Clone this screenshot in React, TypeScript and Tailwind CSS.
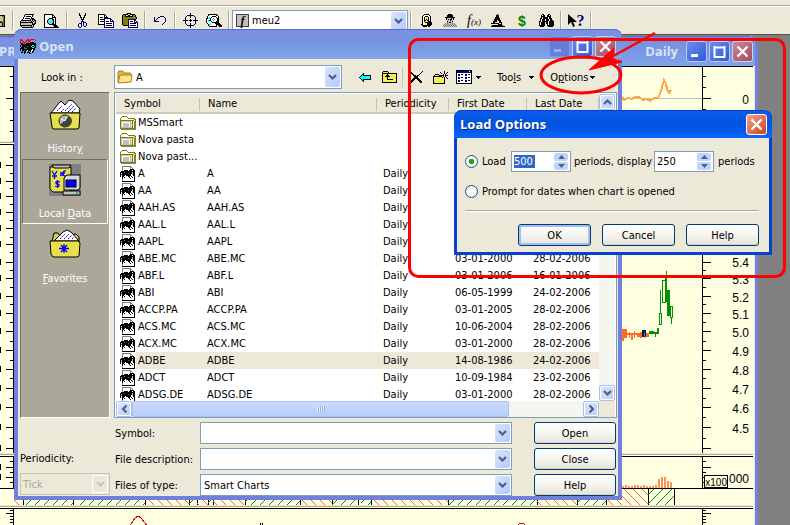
import type { ReactNode } from 'react';

const PALETTE: Record<string, string> = {
    k: '#000000',
    w: '#ffffff',
    g: '#808080',
    s: '#c0c0c0',
    y: '#f5ec5a',
    o: '#808000',
    n: '#000080',
    b: '#0000ff',
    c: '#00ffff',
    t: '#008080',
    r: '#ff0000',
    v: '#008000',
};

function Pixels({ rows, className }: { rows: string[]; className?: string }) {
    const width = Math.max(...rows.map((row) => row.length));
    const cells: ReactNode[] = [];

    rows.forEach((row, y) => {
        let x = 0;
        while (x < row.length) {
            const key = row[x];
            let end = x + 1;
            while (end < row.length && row[end] === key) end++;
            if (PALETTE[key]) {
                cells.push(<rect key={`${x}-${y}`} x={x} y={y} width={end - x} height={1} fill={PALETTE[key]} />);
            }
            x = end;
        }
    });

    return (
        <svg
            width={width}
            height={rows.length}
            viewBox={`0 0 ${width} ${rows.length}`}
            shapeRendering="crispEdges"
            className={`shrink-0 ${className ?? ''}`}
            aria-hidden="true"
        >
            {cells}
        </svg>
    );
}

const SAVE = [
    'kkkkkkkkkkkkkk',
    'kokssssssssook',
    'kookssssssssok',
    'kookssssssssok',
    'kookssssssssok',
    'kookssssssssok',
    'kooooooooooook',
    'koookkkkkkkook',
    'koookkkkssskok',
    'koookkkkssskok',
    'koookkkkssskok',
    'kkkkkkkkkkkkkk',
];

const PRINT = [
    '.....kkkkkkkkk..',
    '....kwwwwwwwk...',
    '....kwkkkkkwk...',
    '...kwwwwwwwk....',
    '...kwkkkkkwkkk..',
    '..kwwwwwwwkskkk.',
    '.kkkkkkkkkkskskk',
    'kssssssssssksksk',
    'kkkkkkkkkkkkkssk',
    'ksssssssyysskskk',
    'kssssssssssskkk.',
    'kkkkkkkkkkkksk..',
    '.ksssssssssksk..',
    '..kkkkkkkkkkk...',
];

const PREVIEW = [
    'kkkkkkkkk.......',
    'kwwwwwwwkk......',
    'kwwwwwwwkwk.....',
    'kwwwwwwwkkkk....',
    'kwwwwkkkkwwk....',
    'kwwwkccskkwk....',
    'kwwkcwcssk.k....',
    'kwwkccccsk.k....',
    'kwwkscccck.k....',
    'kwwwkssckk.k....',
    'kwwwwkkkkkkk....',
    'kwwwwwwwwkkkk...',
    'kwwwwwwwwwkkkk..',
    'kkkkkkkkkkkkkkk.',
];

const CUT = [
    '..k.....k.',
    '..k.....k.',
    '..kk...kk.',
    '...k...k..',
    '...kk.kk..',
    '....k.k...',
    '....kkk...',
    '.....k....',
    '....nnn...',
    '....n.nnn.',
    '..nnn.n..n',
    '.n..n.n..n',
    '.n..n.n..n',
    '.n..n..nn.',
    '..nn......',
];

const COPY = [
    'kkkkkkk.........',
    'kwwwwwkk........',
    'kwwwwwkwk.......',
    'kwkkkwkkkk......',
    'kwwwwwnnnnnnn...',
    'kwkkkknwwwwwnn..',
    'kwwwwwnwwwwwnwn.',
    'kwkkkknwkkkwnnnn',
    'kwwwwwnwwwwwwwwn',
    'kwwwwwnwkkkkkkwn',
    'kkkkkknwwwwwwwwn',
    '......nwkkkkkkwn',
    '......nwwwwwwwwn',
    '......nnnnnnnnnn',
];

const PASTE = [
    '.....kkkk.......',
    '.kkkkkyykkkkk...',
    'kogkyykkyykgok..',
    'kogkkkkkkkkgok..',
    'koooooooooooook.',
    'koooooooooooook.',
    'kooooonnnnnnnk..',
    'kooooonwwwwwnn..',
    'kooooonwkkkwnwn.',
    'kooooonwwwwwnnnn',
    'kooooonwkkkkkkwn',
    'kooooonwwwwwwwwn',
    '.kkkkknwkkkkkkwn',
    '......nwwwwwwwwn',
    '......nnnnnnnnnn',
];

const UNDO = [
    '......nnnn..',
    'n...nn....n.',
    'n..n.......n',
    'n.n........n',
    'nn.........n',
    'nnnnn......n',
    '..........n.',
    '.........n..',
    '........n...',
];

const TARGET = [
    '.......k.......',
    '.......k.......',
    '....nnnknnn....',
    '...n...k...n...',
    '..n....k....n..',
    '..n.........n..',
    '..n....k....n..',
    'kkkkk.kkk.kkkkk',
    '..n....k....n..',
    '..n.........n..',
    '..n....k....n..',
    '...n...k...n...',
    '....nnnknnn....',
    '.......k.......',
    '.......k.......',
];

const FIND = [
    '..kkkkkkkkk.....',
    '..kwwwwwwwkk....',
    '.kwwwwkkkkwwk...',
    '.kwcwkwwwwkwk...',
    'kkcckwwgwwwkk...',
    'kwwwkwgwgwwkk...',
    'kwckkwwgwwwkk...',
    'kwccwkwwwwkkk...',
    'kwwwwwkkkkkkk...',
    '.kwwcwwwwkkkkk..',
    '..kccwwwwwkkkkk.',
    '..kwwwwwwwk.kkkk',
    '...kkkkkkkk..kkk',
];

const EXPERT = [
    '...kkkkk...',
    '..kwwwwwk..',
    '.kwwkkkwwk.',
    '.kwkyyykwk.',
    '.kwkyyykwk.',
    '.kwkykykwk.',
    '.kwkkykkwk.',
    '.kwkyyykkk.',
    '.kwwkkkkkkk',
    '.kwwwwkkkkk',
    'kkwwyykkkkk',
    '.kkkkkkkkk.',
    '..kkkk.kk..',
];

const DETECTIVE = [
    '.....kkkk.....',
    '....kkkkkk....',
    '....kkkkkk....',
    '..kkkkkkkkkk..',
    '...kssssksk...',
    '...kskskksk...',
    '....ssskss....',
    '....kssssk....',
    '....gskksg....',
    '..gsgssssgsg..',
    '.gsgsgsgsgsgs.',
    'gsgsgsgsgsgsgs',
    'sgsgsgsgsgsgsg',
];

const SCOPE = [
    '......k.......',
    '.....kkk......',
    '.....kkk......',
    '....kkkk......',
    '....kkkkk.....',
    '...kkkkkk.....',
    '...kkk.kkk....',
    '..kkkk..kk....',
    '..kk....kkk...',
    'kkkkkkkkyyk...',
    '.......kkkk...',
    '.kkkkkkkkkkk..',
    'kkkkkkkkkkkkkk',
];

const BINOCULARS = [
    '...kk....kk....',
    '..kwkk..kkwk...',
    '..kkkk..kkkk...',
    '..kwkkkkkwkk...',
    '.kkwkkkkkwkkk..',
    '.kwkkkwkkkwkk..',
    '.kwkkkwkkkwkkk.',
    'kkwkkkkkkwkkkkk',
    'kwkkkkwkkwkkkkk',
    'kwkkkk.kkwkkkkk',
    'kwkkkk..kwkkkkk',
    'kkkkkk..kkkkkkk',
    '.kkkk....kkkkk.',
];

const BACK = [
    '....k.......',
    '...kk.......',
    '..kckkkkkkkk',
    '.kccccccccck',
    'kcccccccccck',
    '.kccccccccck',
    '..kckkkkkkkk',
    '...kk.......',
    '....k.......',
];

const UP = [
    '.kkkkk.........',
    'kyyyyyk........',
    'kkkkkkkkkkkkkkk',
    'kyyyykyyyyyyyyk',
    'kyyykkkyyyyyyyk',
    'kyykkkkkyyyyyyk',
    'kyyyykyyyyyyyyk',
    'kyyyykyyyyyyyyk',
    'kyyyykkkkkkyyyk',
    'kyyyyyyyyyyyyyk',
    'kyyyyyyyyyyyyyk',
    'kkkkkkkkkkkkkkk',
];

const REMOVE = [
    'k...........k',
    'kk.........k.',
    '.kk.......k..',
    '..kk.....k...',
    '...kkk.kk....',
    '....kkkk.....',
    '....kkkk.....',
    '...kkkkkk....',
    '..kkk..kkk...',
    '.kkk....kkk..',
    'kkk......kkk.',
    'kk........kk.',
];

const NEW_FOLDER = [
    '...........k...',
    '.......k...k..k',
    '........k..k.k.',
    '..kkkk....k.k..',
    '.kyyyykkkkk.kkk',
    'kkkkkkkkk.k.k..',
    'kyyyyyyyyk.k.k.',
    'kyyyyyyyyyyk..k',
    'kyyyyyyyyyyk...',
    'kyyyyyyyyyyk...',
    'kyyyyyyyyyyk...',
    'kyyyyyyyyyyk...',
    'kkkkkkkkkkkk...',
];

const VIEWS = [
    'kkkkkkkkkkkkkkkk',
    'knnnnnnnnnnnnwnk',
    'knnnnnnnnnnnnnnk',
    'kwwwwwwwwwwwwwwk',
    'kwnnwkkwwnnwkkwk',
    'kwnnwwwwwnnwwwwk',
    'kwwwwwwwwwwwwwwk',
    'kwnnwkkwwnnwkkwk',
    'kwnnwwwwwnnwwwwk',
    'kwwwwwwwwwwwwwwk',
    'kwnnwkkwwnnwkkwk',
    'kwnnwwwwwnnwwwwk',
    'kwwwwwwwwwwwwwwk',
    'kkkkkkkkkkkkkkkk',
];

const SECURITY = [
    '..ggggggggg.....',
    '..gwwwwwwwgg....',
    '..gwwwwwwwgwg...',
    '..gwwwwwwwkkkk..',
    '..gwkkkkwkkkwkk.',
    '.kkkkkkkkkkkkkk.',
    'kkkktkkkkkkkskk.',
    'kskkkkkktkkkskk.',
    'ktkkkkkkkkkwskk.',
    'k.kkkwkkkkkwwkk.',
    'k.kkwwwwkkwkwwk.',
    '..kwkwwwwkwwkwk.',
    '..kwwwwwwwkwwwk.',
    '..gwwwwwwwwwwwk.',
    '..gwwwwwwwwwwwk.',
    '..kkkkkkkkkkkkk.',
];

const FOLDER = [
    '..ooooo.........',
    '.owwwwwo........',
    'owwwwwwwooooooo.',
    'owwwwwwwwwwwwwoo',
    'oooooooooooooowo',
    'osssssssssswowoo',
    'oswwwwwwwwsyowoo',
    'oswsssssswsyowog',
    'oswsssssswsyowog',
    'oswsssssswsyowog',
    'oswsssssswsyowog',
    'osssssssssssowog',
    'ooooooooooooooog',
    '.ggggggggggggggg',
];

const BUG = [
    'rr.....rr.rrrrr.',
    'rrr...rrrrr....r',
    'r.rr.rr.rr......',
    'r..rrr..r.kkkk..',
    'rkk.r.kkkkkkkkkk',
    '.kkkkkkkkkkkkkkk',
    'k.kkkkkkkkkkcckk',
    'k.kkkkktkkkckkck',
    '.kkktkkkkkkkcckk',
    'kkkktttkkkkkkkk.',
    'k.kkkkkkkkkkwkk.',
    'k.kktkkskkkwwk..',
    '..k.kkwsk.kwkk..',
    '.kk.kk.kkk..k...',
    '....k....kk.....',
];

function BarButton({ label, children }: { label: string; children: ReactNode }) {
    return (
        <button type="button" aria-label={label} className="flex h-6 w-6 shrink-0 items-center justify-center">
            {children}
        </button>
    );
}

function BarDivider() {
    return (
        <span className="flex h-full w-[6px] shrink-0 justify-center py-1">
            <span className="w-px bg-[#aca899]" />
            <span className="w-px bg-white" />
        </span>
    );
}

function Chevron({ className }: { className?: string }) {
    return (
        <svg width="9" height="6" viewBox="0 0 9 6" className={className} aria-hidden="true">
            <path d="M1 1 4.500 4.500 8 1" fill="none" stroke="currentColor" strokeWidth="2.200" />
        </svg>
    );
}

function Combo({ label, options, icon, className }: { label: string; options: string[]; icon?: ReactNode; className?: string }) {
    return (
        <div className={`relative flex items-center border border-[#7f9db9] bg-white ${className ?? ''}`}>
            {icon && <span className="pl-[2px]">{icon}</span>}
            <select aria-label={label} className="h-full min-w-0 grow appearance-none bg-transparent pr-5 pl-[3px] outline-none">
                {options.map((option) => (
                    <option key={option}>{option}</option>
                ))}
            </select>
            <span className="pointer-events-none absolute inset-y-px right-px flex w-[15px] items-center justify-center rounded-[2px] bg-gradient-to-br from-[#d8e4fd] to-[#b3cafb] text-[#4d6185]">
                <Chevron />
            </span>
        </div>
    );
}

function PushButton({ children, isDefault, className }: { children: ReactNode; isDefault?: boolean; className?: string }) {
    return (
        <button
            type="button"
            className={`flex h-[22px] items-center justify-center rounded-[3px] border border-[#003c74] bg-gradient-to-b from-white via-[#f5f4ee] to-[#e6e3d8] ${
                isDefault ? 'shadow-[inset_0_0_0_2px_#a5bdf0]' : 'shadow-[inset_0_-1px_0_#d6d0c5]'
            } ${className ?? ''}`}
        >
            {children}
        </button>
    );
}

function CaptionButton({ kind, dim, active }: { kind: 'minimize' | 'maximize' | 'close'; dim?: boolean; active?: boolean }) {
    const tone =
        kind === 'close'
            ? active
                ? 'border-white bg-gradient-to-br from-[#f0a088] to-[#d0401c]'
                : 'border-[#c9d1f2] bg-gradient-to-br from-[#c48a9c] to-[#a8495c]'
            : dim
              ? 'border-[#7f93e2] bg-[#5c78d8] opacity-80'
              : 'border-[#b9c8f5] bg-gradient-to-br from-[#6b8af0] to-[#3059d6]';

    return (
        <button type="button" aria-label={kind} className={`flex h-[21px] w-[21px] items-center justify-center rounded-[3px] border ${tone}`}>
            <svg width="13" height="13" viewBox="0 0 13 13" fill="none" stroke={dim ? '#9db0ee' : '#fff'} strokeWidth="2" aria-hidden="true">
                {kind === 'minimize' && <path d="M1 10.500H8" strokeWidth="3" />}
                {kind === 'maximize' && <path d="M1.500 1V12H11.500V1M1 2.500H12" />}
                {kind === 'close' && <path d="M1.500 1.500 11.500 11.500M11.500 1.500 1.500 11.500" strokeWidth="2.400" />}
            </svg>
        </button>
    );
}

function MainToolbar() {
    return (
        <div className="border-b border-[#55534b] bg-[#ece9d8]">
            <div className="h-[6px] border-b border-[#aca899]" />
            <div className="flex h-7 items-center overflow-hidden border-t border-white">
                <span className="-ml-[14px] flex">
                    <BarButton label="Save"><Pixels rows={SAVE} /></BarButton>
                </span>
                <BarDivider />
                <BarButton label="Print"><Pixels rows={PRINT} /></BarButton>
                <BarButton label="Print preview"><Pixels rows={PREVIEW} /></BarButton>
                <BarDivider />
                <BarButton label="Cut"><Pixels rows={CUT} /></BarButton>
                <BarButton label="Copy"><Pixels rows={COPY} /></BarButton>
                <BarButton label="Paste"><Pixels rows={PASTE} /></BarButton>
                <BarDivider />
                <BarButton label="Undo"><Pixels rows={UNDO} /></BarButton>
                <BarDivider />
                <BarButton label="Crosshair"><Pixels rows={TARGET} /></BarButton>
                <BarButton label="Zoom"><Pixels rows={FIND} /></BarButton>
                <BarDivider />
                <Combo
                    label="Indicator"
                    options={['meu2']}
                    className="h-[22px] w-[176px] shrink-0"
                    icon={
                        <span className="ml-px flex h-[13px] w-[13px] items-center justify-center border border-[#404040] bg-[#c0c0c0] font-['Liberation_Serif',serif] text-[12px] leading-none font-bold italic">
                            f
                        </span>
                    }
                />
                <BarDivider />
                <BarButton label="Expert Advisor"><Pixels rows={EXPERT} /></BarButton>
                <BarButton label="Explorer"><Pixels rows={DETECTIVE} /></BarButton>
                <BarButton label="Indicator Builder">
                    <span className="font-['Liberation_Serif',serif] text-[14px] leading-none italic">
                        f<span className="text-[9px]">(x)</span>
                    </span>
                </BarButton>
                <BarButton label="System Tester"><Pixels rows={SCOPE} /></BarButton>
                <BarButton label="Option Scope">
                    <span className="font-['Liberation_Sans',sans-serif] text-[14px] leading-none font-bold text-[#008000]">$</span>
                </BarButton>
                <BarButton label="Search"><Pixels rows={BINOCULARS} /></BarButton>
                <BarDivider />
                <BarButton label="Context help">
                    <svg width="9" height="14" viewBox="0 0 9 14" aria-hidden="true">
                        <path d="M0 0V11L3 8 5 13 7 12 5 8H9Z" />
                    </svg>
                    <span className="font-['Liberation_Serif',serif] text-[16px] leading-none font-bold text-[#000080]">?</span>
                </BarButton>
                <BarDivider />
            </div>
        </div>
    );
}

const TOP_TICKS = [76, 87, 98, 109, 120, 131];
const PRICE_TICKS = [157, 165, 173, 181, 188, 196, 204, 212, 220, 228, 237, 244, 252, 262, 270, 278, 287, 296, 304, 313, 322, 331, 341, 350, 360, 369, 378, 388, 398, 407, 417, 427, 438, 448];
const PRICE_LABELS = [
    { y: 262, text: '5.4' },
    { y: 279, text: '5.3' },
    { y: 297, text: '5.2' },
    { y: 314, text: '5.1' },
    { y: 332, text: '5.0' },
    { y: 351, text: '4.9' },
    { y: 370, text: '4.8' },
    { y: 389, text: '4.7' },
    { y: 408, text: '4.6' },
    { y: 428, text: '4.5' },
];
const HATCHES: [number, number, 'up' | 'down'][] = [
    [14, 23, 'down'],
    [23, 73, 'up'],
    [76, 145, 'up'],
    [145, 189, 'down'],
    [189, 197, 'up'],
    [197, 208, 'down'],
    [208, 213, 'up'],
    [213, 245, 'down'],
    [245, 300, 'up'],
    [300, 332, 'down'],
    [332, 358, 'up'],
    [361, 371, 'up'],
    [371, 448, 'down'],
    [448, 537, 'up'],
    [537, 577, 'down'],
    [577, 606, 'up'],
    [606, 648, 'down'],
    [648, 674, 'up'],
];
const VOLUMES = [2, 2, 3, 2, 2, 3, 3, 2, 3, 2, 2, 2, 3, 9, 11, 11, 7, 6];

function Ticks() {
    const price = PRICE_TICKS.map((y, i) => ({ y, major: i % 2 === 1 }));
    const top = TOP_TICKS.map((y) => ({ y, major: y === 98 }));
    const volume = [461, 467, 472, 477, 482].map((y, i) => ({ y, major: i % 2 === 1 }));
    const bottom = [510, 513, 516, 519, 522].map((y) => ({ y, major: y === 513 }));

    return (
        <>
            {[...price, ...top, ...volume, ...bottom].map(({ y, major }) => (
                <g key={y}>
                    <rect x={major ? 6 : 10} y={y} width={major ? 7 : 3} height="1" />
                    <rect x="703" y={y} width={major ? 8 : 3} height="1" />
                    {major && y > 150 && y < 480 && <rect x="0" y={y - 3} width="1" height="6" />}
                </g>
            ))}
        </>
    );
}

// Drawn in screen coordinates, the toolbar and title bar take the first 66px.
function Chart() {
    return (
        <svg width="754" height="459" viewBox="0 66 754 459" shapeRendering="crispEdges" className="shrink-0" role="img" aria-label="Daily chart">
            <defs>
                <pattern id="up" width="9" height="9" patternUnits="userSpaceOnUse">
                    <path d="M0 9 9 0" stroke="#009000" strokeWidth="1.200" />
                </pattern>
                <pattern id="down" width="9" height="9" patternUnits="userSpaceOnUse">
                    <path d="M0 0 9 9" stroke="#ff6a22" strokeWidth="1.200" />
                </pattern>
            </defs>
            <rect y="66" width="754" height="459" fill="#ffffe1" />
            <path d="M0 66.500H753M0 144.500H753M0 456.500H753M0 488.500H753M0 508.500H753" stroke="#000" />
            <path d="M0 142.500H753M0 454.500H753M0 506.500H753" stroke="#aca899" strokeWidth="1" />
            <path d="M0 141.500H753M0 453.500H753M0 505.500H753" stroke="#ece9d8" strokeWidth="1" />
            <path d="M13.500 66V142M13.500 145V453M13.500 456V489M13.500 508V525M702.500 66V142M702.500 145V453M702.500 456V488M702.500 508V525" stroke="#000" />
            <Ticks />

            <path d="M600 98.500H702" stroke="#c0c0c0" />
            <path
                d="M618 96 622 97 624 100 628 98 632 99 635 97 639 97 643 100 647 99 650 101 654 98 658 98 660 94 662 87 664 80 666 84 667 89 669 93 671 90"
                fill="none"
                stroke="#ffa64d"
                strokeWidth="2"
            />

            <g fill="#ff6a22">
                <rect x="622" y="329" width="2" height="12" />
                <rect x="624" y="329" width="3" height="9" />
                <rect x="629" y="332" width="1" height="6" />
                <rect x="631" y="335" width="2" height="5" />
                <rect x="634" y="331" width="1" height="7" />
                <rect x="637" y="333" width="3" height="4" />
                <rect x="640" y="332" width="2" height="6" />
                <rect x="646" y="333" width="3" height="4" />
                <rect x="627" y="333" width="20" height="2" />
            </g>
            <rect x="642" y="330" width="4" height="7" fill="#001c3c" />
            <rect x="644" y="333" width="1" height="5" fill="#2a9fd8" />
            <g fill="#009000">
                <rect x="649" y="331" width="5" height="3" />
                <rect x="654" y="332" width="3" height="2" />
                <rect x="657" y="328" width="2" height="6" />
                <rect x="655" y="334" width="1" height="3" />
                <rect x="660" y="290" width="1" height="23" />
                <rect x="665" y="278" width="2" height="24" />
                <rect x="666" y="271" width="1" height="8" />
                <rect x="665" y="280" width="1" height="18" />
                <rect x="667" y="290" width="3" height="26" />
                <rect x="671" y="317" width="1" height="7" />
            </g>
            <g fill="#ffffe1" stroke="#009000">
                <rect x="659.500" y="313.500" width="2" height="11" />
                <rect x="662.500" y="280.500" width="3" height="22" />
                <rect x="670.500" y="306.500" width="2" height="11" />
            </g>

            {VOLUMES.map((height, i) => (
                <rect key={i} x={619 + i * 3} y={488 - height} width={2} height={height} fill="#ff8f5a" />
            ))}
            {HATCHES.map(([from, to, pattern]) => (
                <g key={from}>
                    <rect x={from} y="489" width={to - from} height="16" fill={`url(#${pattern})`} />
                    <rect x={to} y="489" width="1" height="16" />
                </g>
            ))}
            <path d="M129 527 135 518 138 516 141 518 148 527M517 526 520 523 523 523 526 526" fill="none" stroke="#e00000" />
            <path d="M260.500 523V525M262.500 523V525" stroke="#000" />

            <g fontFamily="Liberation Sans, sans-serif" fontSize="12" textAnchor="end">
                <text x="749" y="104">0</text>
                {PRICE_LABELS.map(({ y, text }) => (
                    <text key={text} x="749" y={y + 5}>{text}</text>
                ))}
                <text x="749" y="483">000</text>
                <rect x="704.500" y="475.500" width="23" height="12" fill="#ffffe1" stroke="#000" />
                <text x="727" y="486" fontSize="10">x100</text>
            </g>
        </svg>
    );
}

function ChartWindow() {
    return (
        <section className="absolute -left-1 top-[36px] flex h-full w-[762px] flex-col rounded-tr-lg border-x-[3px] border-[#7080dc] bg-[#ece9d8]">
            <header className="flex h-[30px] shrink-0 items-center rounded-tr-md border-t border-[#5c68d0] bg-gradient-to-b from-[#7a8fe0] via-[#7797e2] to-[#82a4ea] pr-[2px] font-['Open_Sans','Noto_Sans',sans-serif] text-[13px] font-bold text-[#d8e4f8]">
                <span className="grow">PR</span>
                <span>Daily</span>
                <span className="ml-2 flex gap-[2px]">
                    <CaptionButton kind="minimize" />
                    <CaptionButton kind="maximize" />
                    <CaptionButton kind="close" />
                </span>
            </header>
            <div className="flex pl-px">
                <Chart />
            </div>
        </section>
    );
}

interface Security {
    symbol: string;
    first?: string;
    last?: string;
}

const FOLDERS = ['MSSmart', 'Nova pasta', 'Nova past...'];

const SECURITIES: Security[] = [
    { symbol: 'A' },
    { symbol: 'AA' },
    { symbol: 'AAH.AS' },
    { symbol: 'AAL.L' },
    { symbol: 'AAPL' },
    { symbol: 'ABE.MC', first: '03-01-2000', last: '28-02-2006' },
    { symbol: 'ABF.L', first: '03-01-2006', last: '16-01-2006' },
    { symbol: 'ABI', first: '06-05-1999', last: '24-02-2006' },
    { symbol: 'ACCP.PA', first: '03-01-2005', last: '28-02-2006' },
    { symbol: 'ACS.MC', first: '10-06-2004', last: '28-02-2006' },
    { symbol: 'ACX.MC', first: '03-01-2000', last: '28-02-2006' },
    { symbol: 'ADBE', first: '14-08-1986', last: '24-02-2006' },
    { symbol: 'ADCT', first: '10-09-1984', last: '23-02-2006' },
    { symbol: 'ADSG.DE', first: '03-01-2000', last: '28-02-2006' },
];

function ScrollButton({ label, turn }: { label: string; turn: string }) {
    return (
        <button
            type="button"
            aria-label={label}
            className="flex h-4 w-4 shrink-0 items-center justify-center rounded-[2px] border border-[#a9bff0] bg-gradient-to-br from-[#dce7fe] to-[#b8cdfb] text-[#4d6185] shadow-[inset_0_0_0_1px_#fff]"
        >
            <Chevron className={turn} />
        </button>
    );
}

function FileList() {
    return (
        <div className="flex min-w-0 grow flex-col border border-[#7f9db9] bg-white px-px pt-px">
            <div className="flex min-h-0 grow">
                <div className="min-w-0 grow overflow-hidden">
                    <table className="w-full table-fixed border-collapse text-left leading-3">
                        <colgroup>
                            <col className="w-[84px]" />
                            <col />
                            <col className="w-[72px]" />
                            <col className="w-[78px]" />
                            <col className="w-[72px]" />
                        </colgroup>
                        <thead>
                            <tr className="h-5 bg-[#ece9d8] shadow-[inset_0_-2px_0_#d0ccbb]">
                                {['Symbol', 'Name', 'Periodicity', 'First Date', 'Last Date'].map((title) => (
                                    <th key={title} className="p-0 font-normal">
                                        <span className="flex h-[13px] items-center border-r border-[#c7c5b2] pl-2 whitespace-nowrap">{title}</span>
                                    </th>
                                ))}
                            </tr>
                        </thead>
                        <tbody>
                            {FOLDERS.map((folder) => (
                                <tr key={folder} className="h-[17px]">
                                    <td colSpan={5} className="p-0 pl-1">
                                        <span className="flex h-[17px] items-center gap-[2px] whitespace-nowrap">
                                            <Pixels rows={FOLDER} />
                                            {folder}
                                        </span>
                                    </td>
                                </tr>
                            ))}
                            {SECURITIES.map(({ symbol, first, last }) => (
                                <tr key={symbol} className={`h-[17px] ${symbol === 'ADBE' ? 'bg-[#ece9d8]' : ''}`}>
                                    <td className="p-0">
                                        <span className="flex h-[17px] items-center whitespace-nowrap">
                                            <span className="flex h-full w-5 items-center bg-white pl-1">
                                                <Pixels rows={SECURITY} />
                                            </span>
                                            <span className="pl-[2px]">{symbol}</span>
                                        </span>
                                    </td>
                                    <td className="p-0 pl-[7px]">{symbol}</td>
                                    <td className="p-0 pl-[6px]">Daily</td>
                                    <td className="p-0 pl-[6px] whitespace-nowrap">{first}</td>
                                    <td className="p-0 pl-[6px] whitespace-nowrap">{last}</td>
                                </tr>
                            ))}
                        </tbody>
                    </table>
                </div>
                <div className="flex w-4 flex-col bg-[#f6f6f1]">
                    <ScrollButton label="Scroll up" turn="rotate-180" />
                    <div className="h-10 rounded-[2px] border border-[#a9bff0] bg-[#c8d8fc]" />
                    <div className="grow" />
                    <ScrollButton label="Scroll down" turn="" />
                </div>
            </div>
            <div className="flex h-4 shrink-0 bg-[#ece9d8]">
                <div className="flex grow bg-[#f6f6f1]">
                    <ScrollButton label="Scroll left" turn="rotate-90" />
                    <div className="flex w-[78%] items-center justify-center gap-px rounded-[2px] border border-[#a9bff0] bg-gradient-to-b from-[#cbdafd] to-[#b9cdfa]">
                        {[0, 1, 2, 3].map((grip) => (
                            <span key={grip} className="h-[6px] w-px bg-[#eef4fe] shadow-[1px_0_0_#8cb0f8]" />
                        ))}
                    </div>
                    <div className="grow" />
                    <ScrollButton label="Scroll right" turn="-rotate-90" />
                </div>
                <div className="w-4" />
            </div>
        </div>
    );
}

function PlaceFolder({ children }: { children: ReactNode }) {
    return (
        <svg width="32" height="32" viewBox="0 0 32 32" aria-hidden="true">
            {children}
        </svg>
    );
}

function Places() {
    return (
        <nav className="flex w-[90px] shrink-0 flex-col border border-t-[#716f64] border-r-white border-b-white border-l-[#716f64] bg-[#aca899] p-px text-white">
            <a href="#history" className="flex h-[65px] flex-col items-center pt-[5px]">
                <PlaceFolder>
                    <path d="M2 14 10 4 12 2 16 6 20 1 24 2 31 10 30 14Z" fill="#fff" stroke="#000" />
                    <path d="M8 12 13 7M12 13 15 10M16 12 23 5M19 13 25 7M23 13 27 9" stroke="#0000d0" strokeDasharray="2 1" />
                    <path d="M1 14H31L30 29 28 30H4L3 28Z" fill="#e8e04a" stroke="#000" />
                    <circle cx="16" cy="22" r="6" fill="#b8b8b8" stroke="#202020" />
                    <path d="M11 26 16 21 20 17A6 6 0 0 1 16 28Z" fill="#404040" />
                    <path d="M12 20 16 22 18 18" stroke="#fff" fill="none" />
                </PlaceFolder>
                <span className="mt-[11px]">Histor<u>y</u></span>
            </a>
            <a
                href="#local"
                className="flex h-[65px] flex-col items-center border border-t-[#716f64] border-r-white border-b-white border-l-[#716f64] pt-1"
            >
                <svg width="32" height="32" viewBox="0 0 32 32" aria-hidden="true">
                    <rect width="32" height="32" fill="#808080" />
                    <path d="M1 3H22V28H4L1 25Z" fill="#e8e04a" stroke="#000" />
                    <path d="M3 1H22L20 4H5Z" fill="#c0c0c0" stroke="#000" />
                    <path d="M3 7 5.500 11 8 7M5.500 11V15M3 12H8" fill="none" stroke="#0000ff" strokeWidth="1.300" />
                    <path d="M17 7C13 6 13 13 17 12M11 9H16M11 11H15" fill="none" stroke="#0000ff" strokeWidth="1.300" />
                    <path d="M11 18C6 16 6 20 8.500 20S11 24 6 22M8.500 16V24" fill="none" stroke="#0000ff" strokeWidth="1.300" />
                    <path d="M15 14 18 11H31V24L29 26H15Z" fill="#d8d8d8" stroke="#000" />
                    <rect x="17" y="16" width="10" height="7" fill="#0000ff" stroke="#000" />
                    <path d="M14 27H31V31H14Z" fill="#c0c0c0" stroke="#000" />
                    <path d="M27 29H29" stroke="#00c000" strokeWidth="1.500" />
                </svg>
                <span className="mt-[11px]">Local <u>D</u>ata</span>
            </a>
            <a href="#favorites" className="flex h-[65px] flex-col items-center pt-[5px]">
                <PlaceFolder>
                    <path d="M3 13 5 4H9L11 7 27 5 30 8V13Z" fill="#d4cc50" stroke="#000" />
                    <path d="M5 12 14 3 18 1 22 3 30 12Z" fill="#fff" stroke="#000" />
                    <path d="M11 10 16 5M15 10 20 5M19 10 23 6M23 10 25 8" stroke="#0000d0" strokeDasharray="2 1" />
                    <path d="M1 12H29L31 14 30 27 28 28H4L2 25Z" fill="#e8e04a" stroke="#000" />
                    <path d="M15 15V24M10 19.500H20M12 16 18 23M18 16 12 23" stroke="#0000ff" strokeWidth="1.300" />
                </PlaceFolder>
                <span className="mt-[11px]"><u>F</u>avorites</span>
            </a>
        </nav>
    );
}

function Caret() {
    return (
        <svg width="5" height="3" viewBox="0 0 5 3" shapeRendering="crispEdges" aria-hidden="true">
            <path d="M0 0H5L2.500 3Z" />
        </svg>
    );
}

function OpenDialog() {
    return (
        <section
            role="dialog"
            aria-label="Open"
            className="absolute top-[29px] left-[14px] flex w-[608px] flex-col rounded-t-lg border-4 border-t-0 border-[#7080dc] bg-[#ece9d8]"
        >
            <header className="-mx-1 flex h-[30px] items-center rounded-t-lg border-t border-[#5c68d0] bg-gradient-to-b from-[#7a8fe0] via-[#7797e2] to-[#82a4ea] px-[6px] pt-[3px] font-['Open_Sans','Noto_Sans',sans-serif] text-[13px] font-bold text-[#d8e4f8]">
                <Pixels rows={BUG} />
                <span className="grow pl-[3px]">Open</span>
                <span className="flex gap-[2px]">
                    <CaptionButton kind="minimize" dim />
                    <CaptionButton kind="maximize" />
                    <CaptionButton kind="close" />
                </span>
            </header>

            <div className="flex h-[33px] items-center pt-[3px]">
                <span className="w-24 pl-[23px]">Look in :</span>
                <Combo
                    label="Look in"
                    options={['A']}
                    className="h-6 w-[228px]"
                    icon={
                        <svg width="16" height="14" viewBox="0 0 16 14" aria-hidden="true">
                            <path d="M1 12V2L2 1H6L7 3H13L14 4V6" fill="#e6b83c" stroke="#b08010" />
                            <path d="M1 13 3 5H15L14 12Z" fill="#fbe48a" stroke="#b08010" />
                        </svg>
                    }
                />
                <span className="ml-[11px] flex items-center">
                    <BarButton label="Back"><Pixels rows={BACK} /></BarButton>
                    <BarButton label="Up one level"><Pixels rows={UP} /></BarButton>
                    <span className="mx-px h-5 w-px bg-[#c7c5b2]" />
                    <BarButton label="Delete"><Pixels rows={REMOVE} /></BarButton>
                    <BarButton label="New folder"><Pixels rows={NEW_FOLDER} /></BarButton>
                    <BarButton label="Views"><Pixels rows={VIEWS} /></BarButton>
                    <Caret />
                </span>
                <button type="button" className="ml-4 flex items-center gap-2 whitespace-nowrap">
                    <span>Too<u>l</u>s</span>
                    <Caret />
                </button>
                <button type="button" className="ml-4 flex items-center gap-[2px] whitespace-nowrap">
                    <span>O<u>p</u>tions</span>
                    <Caret />
                </button>
            </div>

            <div className="flex h-[326px] gap-1 pr-px pl-[2px]">
                <Places />
                <FileList />
            </div>

            <div className="flex h-[78px] pt-1 pl-[2px]">
                <div className="flex w-[90px] flex-col justify-end pb-px">
                    <label htmlFor="periodicity" className="mb-2">Periodicity:</label>
                    <div className="relative flex h-[22px] border border-[#c9c7ba] text-[#aca899]">
                        <select id="periodicity" disabled className="w-full appearance-none bg-transparent pl-[2px]">
                            <option>Tick</option>
                        </select>
                        <span className="pointer-events-none absolute inset-y-px right-px flex w-4 items-center justify-center border border-white text-[#c9c7ba]">
                            <Chevron />
                        </span>
                    </div>
                </div>
                <div className="ml-[5px] flex grow flex-col gap-1">
                    {[
                        { label: 'Symbol:', options: [''], action: 'Open' },
                        { label: 'File description:', options: [''], action: 'Close' },
                        { label: 'Files of type:', options: ['Smart Charts'], action: 'Help' },
                    ].map(({ label, options, action }) => (
                        <div key={label} className="flex items-center">
                            <span className="w-[85px] shrink-0 whitespace-nowrap">{label}</span>
                            <Combo label={label} options={options} className="h-[22px] grow" />
                            <PushButton className="mr-[2px] ml-[22px] w-[82px]">{action}</PushButton>
                        </div>
                    ))}
                </div>
            </div>
        </section>
    );
}

function Spinner({ label, value, selected }: { label: string; value: string; selected?: boolean }) {
    return (
        <span className="flex h-[21px] w-[60px] shrink-0 items-center border border-[#7f9db9] bg-white px-[2px]">
            <input
                aria-label={label}
                defaultValue={value}
                className={`h-[13px] outline-none ${selected ? 'w-[21px] bg-[#316ac5] text-white' : 'w-[22px]'}`}
            />
            <span className="ml-auto flex flex-col gap-px">
                {['rotate-180', ''].map((turn) => (
                    <button
                        key={turn}
                        type="button"
                        aria-label={turn ? 'Increase' : 'Decrease'}
                        className="flex h-2 w-[14px] items-center justify-center rounded-[2px] bg-[#c1d3fb]"
                    >
                        <svg width="7" height="4" viewBox="0 0 7 4" fill="#4d6185" className={turn} aria-hidden="true">
                            <path d="M0 0H7L3.500 4Z" />
                        </svg>
                    </button>
                ))}
            </span>
        </span>
    );
}

const RADIO =
    'h-[13px] w-[13px] shrink-0 appearance-none rounded-full border border-[#1c5180] bg-white bg-radial from-white from-40% to-[#e3e1d8] checked:from-[#21a121] checked:from-30% checked:to-white checked:to-40%';

function LoadOptions() {
    return (
        <section
            role="dialog"
            aria-label="Load Options"
            className="absolute top-[110px] left-[454px] flex w-[318px] flex-col rounded-t-lg border-[3px] border-t-0 border-[#0a3fd0] bg-[#ece9d8]"
        >
            <header className="-mx-[3px] flex h-7 items-center rounded-t-lg border-t border-[#0a3fc8] bg-gradient-to-b from-[#0a5be8] via-[#0054e0] to-[#0a66fa] pr-[5px] pl-[6px] font-['Open_Sans','Noto_Sans',sans-serif] text-[13px] font-bold text-white [text-shadow:1px_1px_#0a2a80]">
                <span className="grow">Load Options</span>
                <CaptionButton kind="close" active />
            </header>
            <div className="flex flex-col pt-3 pr-[10px] pb-[6px] pl-2">
                <div className="flex h-[22px] items-center whitespace-nowrap">
                    <input id="load" type="radio" name="mode" defaultChecked className={RADIO} />
                    <label htmlFor="load" className="w-[33px] pl-1">Load</label>
                    <Spinner label="Periods to load" value="500" selected />
                    <span className="w-[83px] shrink-0 pl-[3px]">periods, display</span>
                    <Spinner label="Periods to display" value="250" />
                    <span className="pl-1">periods</span>
                </div>
                <div className="mt-2 flex h-[22px] items-center">
                    <input id="prompt" type="radio" name="mode" className={RADIO} />
                    <label htmlFor="prompt" className="pl-1 whitespace-nowrap">Prompt for dates when chart is opened</label>
                </div>
                <div className="mt-2 h-[2px] border-t border-b border-t-[#aca899] border-b-white" />
                <div className="mt-3 flex justify-end gap-[11px]">
                    <PushButton isDefault className="w-[73px]">OK</PushButton>
                    <PushButton className="w-[73px]">Cancel</PushButton>
                    <PushButton className="w-[73px]">Help</PushButton>
                </div>
            </div>
        </section>
    );
}

function Markup() {
    return (
        <svg width="790" height="525" viewBox="0 0 790 525" fill="none" stroke="#ff0000" className="pointer-events-none absolute top-0 left-0" aria-hidden="true">
            <rect x="409.500" y="39.500" width="375" height="237" rx="9" strokeWidth="3" />
            <ellipse cx="581" cy="75" rx="40" ry="18" strokeWidth="3" />
            <path d="M655 33 606 60" strokeWidth="2.500" />
            <path d="M589 70 614 48 612 58 622 62Z" fill="#ff0000" strokeWidth="1" />
        </svg>
    );
}

export default function App() {
    return (
        <main className="relative h-screen w-full overflow-hidden bg-[#808080] font-['DejaVu_Sans_Condensed','Noto_Sans',sans-serif] text-[11px] leading-[13px] text-black">
            <MainToolbar />
            <ChartWindow />
            <OpenDialog />
            <LoadOptions />
            <Markup />
        </main>
    );
}
